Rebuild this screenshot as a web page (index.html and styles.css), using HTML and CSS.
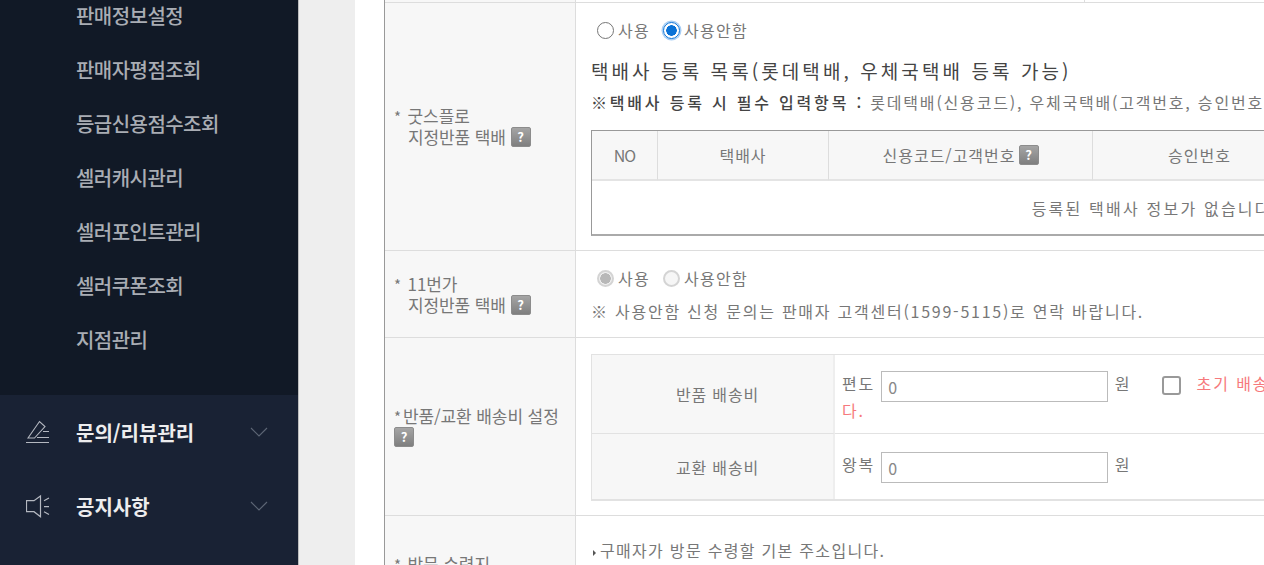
FILE: index.html
```html
<!DOCTYPE html>
<html lang="ko">
<head>
    <meta charset="UTF-8">
    <title>판매자 정보</title>
    <link rel="stylesheet" href="styles.css">
</head>
<body>
    <aside class="sidebar">
        <ul class="submenu">
            <li>판매정보설정</li>
            <li>판매자평점조회</li>
            <li>등급신용점수조회</li>
            <li>셀러캐시관리</li>
            <li>셀러포인트관리</li>
            <li>셀러쿠폰조회</li>
            <li>지점관리</li>
        </ul>
        <div class="menu">
            <div class="menu-item">
                <svg class="menu-icon" viewBox="0 0 24 24" fill="none" stroke="#b4b8c0" stroke-width="1.1">
                    <path d="M2 18 L13.5 1.5 L19 6.5 L8.5 18 Z"/>
                    <path d="M0 22.5 H23 M11 17.5 H23 M17 11.5 H23"/>
                </svg>
                <span>문의/리뷰관리</span>
                <svg class="chevron" viewBox="0 0 18 10" fill="none" stroke="#5d6675" stroke-width="1.1"><path d="M1 1 L9 9 L17 1"/></svg>
            </div>
            <div class="menu-item">
                <svg class="menu-icon" viewBox="0 0 24 24" fill="none" stroke="#b4b8c0" stroke-width="1.2">
                    <path d="M0.5 6.7 H8 L14.5 2 V22.7 L8 17.7 H0.5 Z"/>
                    <path d="M18 6.7 L23 4 M18 12.7 H23 M18 17.7 L23 20.5"/>
                </svg>
                <span>공지사항</span>
                <svg class="chevron" viewBox="0 0 18 10" fill="none" stroke="#5d6675" stroke-width="1.1"><path d="M1 1 L9 9 L17 1"/></svg>
            </div>
        </div>
    </aside>

    <main class="main">
        <table class="form-table">
            <tr class="cut-row">
                <th></th>
                <td><div class="cut-cell"></div></td>
            </tr>
            <tr>
                <th><span class="star">*</span> 굿스플로<br><span class="indent">지정반품 택배</span> <span class="help">?</span></th>
                <td class="pad-first">
                    <div class="radios">
                        <label><input type="radio" name="gf">사용</label>
                        <label><input type="radio" name="gf" class="focused" checked>사용안함</label>
                    </div>
                    <h3 class="list-title">택배사 등록 목록(롯데택배, 우체국택배 등록 가능)</h3>
                    <p class="note-line"><b>※택배사 등록 시 필수 입력항목 :</b> 롯데택배(신용코드), 우체국택배(고객번호, 승인번호)</p>
                    <table class="courier-table">
                        <tr>
                            <th class="col-no">NO</th>
                            <th class="col-name">택배사</th>
                            <th class="col-code">신용코드/고객번호<span class="help help-gap">?</span></th>
                            <th class="col-auth">승인번호</th>
                            <th>관리</th>
                        </tr>
                        <tr>
                            <td colspan="5">등록된 택배사 정보가 없습니다.</td>
                        </tr>
                    </table>
                </td>
            </tr>
            <tr>
                <th><span class="star">*</span> 11번가<br><span class="indent">지정반품 택배</span> <span class="help">?</span></th>
                <td class="pad-second">
                    <div class="radios">
                        <label><input type="radio" name="st" checked disabled>사용</label>
                        <label><input type="radio" name="st" disabled>사용안함</label>
                    </div>
                    <p class="note-contact">※ 사용안함 신청 문의는 판매자 고객센터(1599-5115)로 연락 바랍니다.</p>
                </td>
            </tr>
            <tr>
                <th class="th-fee"><span class="star">*</span>반품/교환 배송비 설정<br><span class="help">?</span></th>
                <td class="pad-third">
                    <table class="fee-table">
                        <tr class="fee-return">
                            <th>반품 배송비</th>
                            <td>
                                <span class="fee-label">편도</span>
                                <input type="text" class="fee-input" value="0">
                                <span class="fee-unit">원</span>
                                <input type="checkbox" class="fee-check">
                                <span class="fee-warn">초기 배송비</span><br>
                                <span class="fee-warn">다.</span>
                            </td>
                        </tr>
                        <tr class="fee-exchange">
                            <th>교환 배송비</th>
                            <td>
                                <span class="fee-label">왕복</span>
                                <input type="text" class="fee-input" value="0">
                                <span class="fee-unit">원</span>
                            </td>
                        </tr>
                    </table>
                </td>
            </tr>
            <tr class="last-row">
                <th><span class="star">*</span> 방문 수령지</th>
                <td class="pad-last"><span class="bullet"></span>구매자가 방문 수령할 기본 주소입니다.</td>
            </tr>
        </table>
    </main>
</body>
</html>
```

FILE: styles.css
```css
* {
    box-sizing: border-box;
}
html, body {
    height: 565px;
    overflow: hidden;
}
body {
    margin: 0;
    display: flex;
    background: #eeeeee;
    font-family: "Noto Sans CJK KR", "Noto Sans", sans-serif;
    font-size: 16px;
    color: #777;
}

/* sidebar */
.sidebar {
    flex: 0 0 299px;
    height: 565px;
    background: #111926;
    border-right: 1px solid #bdbdbd;
    overflow: hidden;
}
.submenu {
    list-style: none;
    margin: -11px 0 0;
    padding: 0 0 28px 76px;
}
.submenu li {
    height: 54px;
    line-height: 53px;
    font-size: 20px;
    font-weight: 500;
    letter-spacing: -0.55px;
    color: #a9adb4;
}
.menu {
    background: #192234;
    height: 200px;
}
.menu-item {
    height: 74px;
    display: flex;
    align-items: center;
    padding-left: 26px;
    font-size: 20px;
    font-weight: 700;
    letter-spacing: 0;
    color: #ededee;
}
.menu-icon {
    width: 24px;
    height: 24px;
    margin-right: 26px;
}
.menu-item span {
    flex: 1;
}
.chevron {
    width: 18px;
    height: 10px;
    margin-right: 30px;
}

/* main */
.main {
    margin-left: 56px;
    flex: 1;
    min-width: 0;
    background: #fff;
    padding-left: 29px;
    overflow: hidden;
}
.form-table {
    width: 1400px;
    table-layout: fixed;
    border-collapse: separate;
    border-spacing: 0;
    border-left: 1px solid #999;
}
.form-table > tbody > tr > th {
    width: 191px;
    padding: 0 9px;
    background: #f7f7f7;
    border-right: 1px solid #ddd;
    border-bottom: 1px solid #ddd;
    font-size: 17px;
    font-weight: 400;
    line-height: 20px;
    letter-spacing: -0.1px;
    text-align: left;
    color: #777;
}
.form-table > tbody > tr > td {
    vertical-align: top;
    padding: 0 0 0 15px;
    border-bottom: 1px solid #ddd;
}
.form-table > tbody > tr.cut-row > td {
    padding: 0;
}
.cut-row th,
.cut-row td {
    height: 3px;
    line-height: 0;
}
.cut-cell {
    width: 509px;
    height: 2px;
    border-right: 1px solid #ddd;
}
.star {
    margin-right: 2px;
    font-size: 15px;
}
.indent {
    padding-left: 14px;
}
.help {
    display: inline-block;
    width: 20px;
    height: 20px;
    vertical-align: top;
    background: linear-gradient(#a5a5a5, #7f7f7f);
    border: 1px solid #8c8c8c;
    border-radius: 2px;
    color: #fff;
    font-size: 13px;
    font-weight: 700;
    line-height: 17px;
    letter-spacing: 0;
    text-align: center;
}
.help-gap {
    margin-left: 3px;
}
.form-table > tbody > tr > td.pad-first {
    padding-top: 17px;
    padding-bottom: 14px;
}
.form-table > tbody > tr > td.pad-second {
    padding-top: 17px;
    padding-bottom: 16px;
}
.form-table > tbody > tr > td.pad-third {
    padding-top: 16px;
    padding-bottom: 14px;
}
.form-table > tbody > tr > td.pad-last {
    padding-top: 24px;
    height: 98px;
    font-size: 16px;
    line-height: 20px;
    letter-spacing: 1.3px;
}

/* radios */
.radios {
    display: flex;
    gap: 13px;
    height: 20px;
    padding-left: 6px;
    font-size: 16px;
    line-height: 20px;
    letter-spacing: 1.3px;
}
.radios label {
    display: flex;
    align-items: center;
}
.radios input {
    appearance: none;
    width: 17px;
    height: 17px;
    margin: 0 4px 0 0;
    background: #fff;
    border: 1.5px solid #767676;
    border-radius: 50%;
}
.radios input:checked {
    border-color: #0a72d6;
    background: radial-gradient(circle, #0a72d6 0 5px, #fff 5.5px);
}
.radios input.focused {
    box-shadow: 0 0 0 1.5px #a9cff5;
}
.radios input:disabled {
    border: 2px solid #d4d4d4;
    background: #f6f6f6;
}
.radios input:disabled:checked {
    background: radial-gradient(circle, #b8b8b8 0 5px, #f0f0f0 5.5px);
}

.list-title {
    margin: 19px 0 0;
    font-size: 19px;
    font-weight: 400;
    line-height: 24px;
    letter-spacing: 3.08px;
    color: #444;
}
.note-line {
    margin: 9px 0 0;
    font-size: 16px;
    line-height: 20px;
    white-space: nowrap;
    letter-spacing: 1.8px;
}
.note-line b {
    font-weight: 500;
    letter-spacing: 2.8px;
    color: #444;
}
.note-contact {
    margin: 13px 0 0;
    font-size: 16px;
    line-height: 20px;
    letter-spacing: 1.75px;
}

/* courier table */
.courier-table {
    margin-top: 18px;
    width: 1128px;
    table-layout: fixed;
    border-collapse: separate;
    border-spacing: 0;
    border: 1px solid #999;
    border-bottom-width: 2px;
    border-bottom-color: #aaa;
    font-size: 16px;
}
.courier-table th {
    height: 50px;
    padding: 0;
    background: #f7f7f7;
    border-right: 1px solid #ddd;
    border-bottom: 2px solid #e4e4e4;
    font-weight: 400;
    line-height: 20px;
    letter-spacing: 1px;
    color: #777;
}
.courier-table th.col-no {
    width: 66px;
    letter-spacing: -1px;
}
.col-name { width: 171px; }
.col-code { width: 264px; }
.col-auth { width: 214px; }
.courier-table td {
    height: 53px;
    text-align: center;
    letter-spacing: 2.2px;
}

/* fee table */
.fee-table {
    width: 1100px;
    table-layout: fixed;
    border-collapse: separate;
    border-spacing: 0;
    border: 1px solid #e2e2e2;
    border-bottom-width: 2px;
    font-size: 16px;
}
.fee-table th {
    width: 243px;
    padding: 0 0 0 10px;
    background: #f7f7f7;
    border-right: 2px solid #eee;
    font-weight: 400;
    letter-spacing: 0.8px;
    color: #777;
}
.fee-table td {
    padding: 0 0 0 7px;
    vertical-align: top;
    line-height: 20px;
    white-space: nowrap;
}
.fee-return th,
.fee-return td {
    height: 79px;
    border-bottom: 1px solid #e2e2e2;
}
.fee-exchange th,
.fee-exchange td {
    height: 65px;
}
.fee-return td {
    padding-top: 16px;
}
.fee-exchange td {
    padding-top: 18px;
}
.fee-label {
    letter-spacing: 1.7px;
}
.fee-input {
    width: 227px;
    height: 31px;
    padding: 0 6px;
    margin: 0 2px -2px 2px;
    border: 1px solid #bbb;
    font-family: "Noto Sans CJK KR", sans-serif;
    font-size: 16px;
    color: #888;
    vertical-align: middle;
}
.fee-unit {
    margin-right: 28px;
}
.fee-check {
    appearance: none;
    width: 19px;
    height: 19px;
    margin: 0 11px 0 0;
    vertical-align: middle;
    border: 2px solid #999;
    border-radius: 3px;
}
.fee-warn {
    color: #f6797c;
    letter-spacing: 1.9px;
}
.bullet {
    display: inline-block;
    width: 0;
    height: 0;
    margin: 0 4px 1px 2px;
    border-left: 3px solid #555;
    border-top: 3px solid transparent;
    border-bottom: 3px solid transparent;
}
```
